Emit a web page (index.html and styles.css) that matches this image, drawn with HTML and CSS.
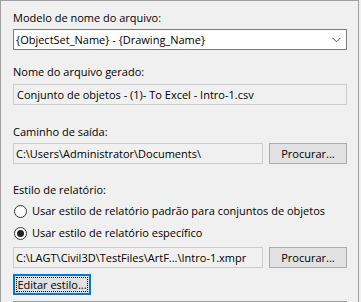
FILE: index.html
```html
<!DOCTYPE html>
<html lang="pt">
<head>
  <meta charset="UTF-8" />
  <title>Exportar</title>
  <link rel="stylesheet" href="styles.css">
</head>
<body>
  <div class="frame">
    <label class="caption first">Modelo de nome do arquivo:</label>
    <div class="combo">
      <span>{ObjectSet_Name} - {Drawing_Name}</span>
      <svg class="chevron" width="9" height="6" viewBox="0 0 9 6">
        <path d="M0.5 0.8 L4.5 4.8 L8.5 0.8" fill="none" stroke="#555" stroke-width="1"/>
      </svg>
    </div>

    <label class="caption gap-generated">Nome do arquivo gerado:</label>
    <div class="field readonly">Conjunto de objetos - (1)- To Excel - Intro-1.csv</div>

    <label class="caption gap-output">Caminho de saída:</label>
    <div class="path-row">
      <div class="field readonly">C:\Users\Administrator\Documents\</div>
      <button class="btn">Procurar...</button>
    </div>

    <label class="caption gap-style">Estilo de relatório:</label>
    <div class="radio-row first-radio">
      <span class="radio"></span>
      <span>Usar estilo de relatório padrão para conjuntos de objetos</span>
    </div>
    <div class="radio-row">
      <span class="radio checked"></span>
      <span>Usar estilo de relatório específico</span>
    </div>
    <div class="path-row tight">
      <div class="field readonly">C:\LAGT\Civil3D\TestFiles\ArtF...\Intro-1.xmpr</div>
      <button class="btn">Procurar...</button>
    </div>
    <button class="btn focused"><span>Editar estilo...</span></button>
    <div class="next-field"></div>
  </div>
</body>
</html>
```

FILE: styles.css
```css
body {
  margin: 0;
  background: #f0f0f0;
  font-family: "Open Sans", "Noto Sans", sans-serif;
  font-size: 11px;
  color: #000;
}

.frame {
  width: 334px;
  height: 301px;
  padding: 0 11px 0 12px;
  border: 1px solid #a0a0a0;
  border-bottom: none;
  overflow: hidden;
}

.caption {
  display: block;
  line-height: 16px;
  white-space: nowrap;
}

.first { margin-top: 9px; }
.gap-generated { margin-top: 14px; }
.gap-output { margin-top: 19px; }
.gap-style { margin-top: 18px; }

.combo {
  margin-top: 3px;
  height: 19px;
  border: 1px solid #7a7a7a;
  background: #fff;
  display: flex;
  align-items: center;
  justify-content: space-between;
  padding: 0 5px 0 2px;
  line-height: 19px;
  white-space: nowrap;
}

.chevron {
  display: block;
}

.field {
  height: 19px;
  line-height: 19px;
  padding: 0 3px;
  border: 1px solid #cccccc;
  white-space: nowrap;
  overflow: hidden;
}

.readonly {
  background: #f0f0f0;
}

.caption + .field {
  margin-top: 4px;
}

.path-row {
  margin-top: 3px;
  display: flex;
  gap: 6px;
}

.path-row .field {
  flex: 1;
  padding-left: 2px;
}

.path-row.tight {
  margin-top: 6px;
}

.btn {
  width: 78px;
  height: 21px;
  padding: 0;
  border: 1px solid #adadad;
  background: #e1e1e1;
  font: inherit;
  color: #000;
  line-height: 19px;
  white-space: nowrap;
  flex: none;
}

.btn.focused {
  display: block;
  margin-top: 6px;
  border: 2px solid #0078d7;
  padding: 1px;
}

.btn.focused span {
  display: block;
  height: 13px;
  line-height: 13px;
  border: 1px dotted #000;
}

.radio-row {
  display: flex;
  align-items: center;
  gap: 5px;
  height: 16px;
  line-height: 16px;
  margin-top: 6px;
  padding-left: 1px;
  white-space: nowrap;
}

.first-radio {
  margin-top: 5px;
}

.radio {
  width: 11px;
  height: 11px;
  border: 1px solid #333;
  border-radius: 50%;
  background: #fff;
  position: relative;
  flex: none;
}

.radio.checked::after {
  content: "";
  position: absolute;
  left: 2px;
  top: 2px;
  width: 7px;
  height: 7px;
  border-radius: 50%;
  background: #222;
}

.next-field {
  margin-top: 6px;
  height: 20px;
  border-top: 1px solid #a0a0a0;
}
```
